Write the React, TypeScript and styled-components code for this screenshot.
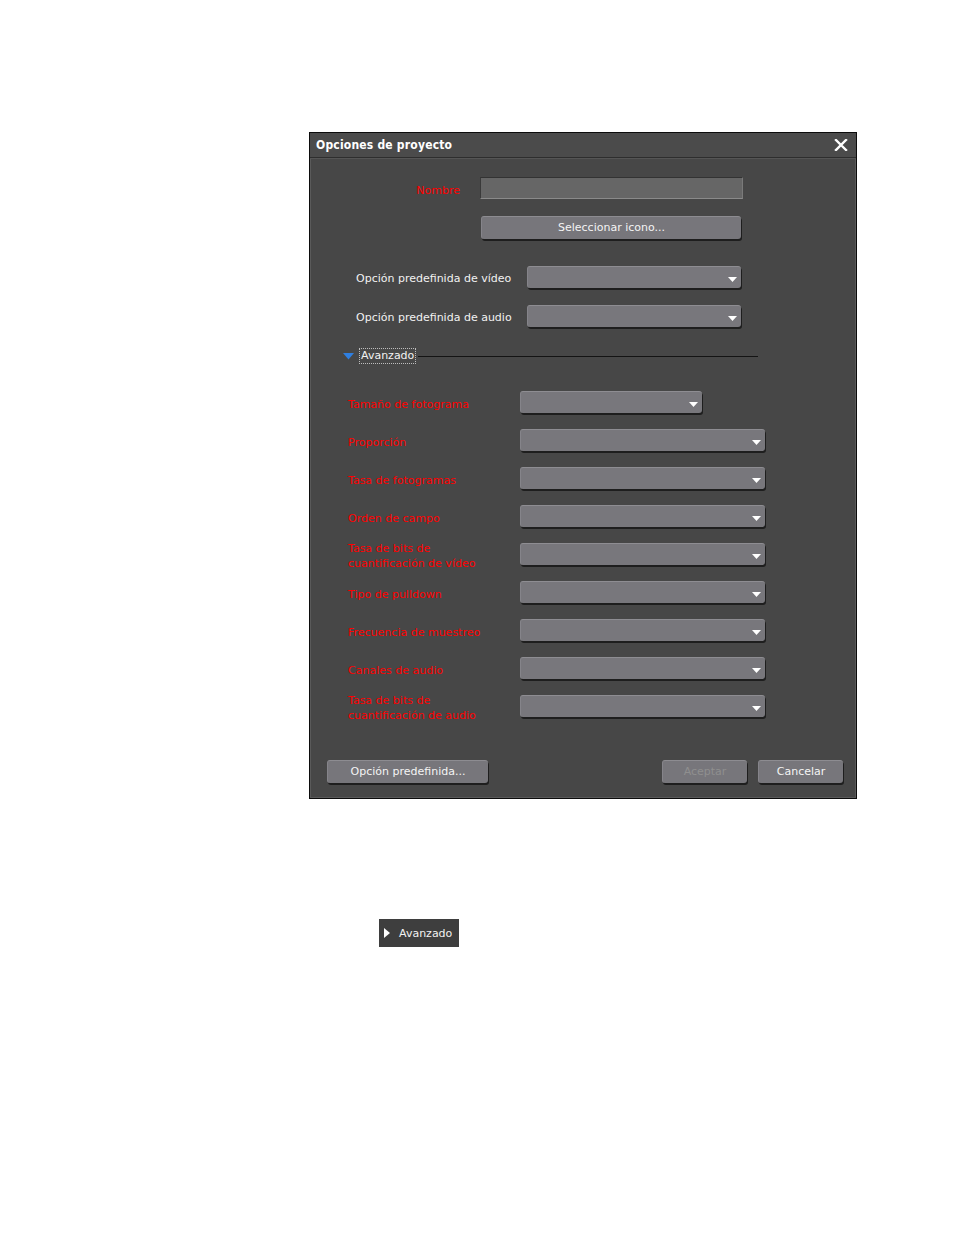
import styled, { createGlobalStyle } from "styled-components";

const GlobalStyle = createGlobalStyle`
  body {
    margin: 0;
    background: #ffffff;
    font-family: "DejaVu Sans", "Liberation Sans", sans-serif;
  }
`;

const presetRows = ["Opción predefinida de vídeo", "Opción predefinida de audio"];

const advancedRows: { label: string[]; narrow?: boolean }[] = [
  { label: ["Tamaño de fotograma"], narrow: true },
  { label: ["Proporción"] },
  { label: ["Tasa de fotogramas"] },
  { label: ["Orden de campo"] },
  { label: ["Tasa de bits de", "cuantificación de vídeo"] },
  { label: ["Tipo de pulldown"] },
  { label: ["Frecuencia de muestreo"] },
  { label: ["Canales de audio"] },
  { label: ["Tasa de bits de", "cuantificación de audio"] },
];

const Arrow = () => (
  <svg width="9" height="5" viewBox="0 0 9 5">
    <path d="M0 0 H9 L4.5 5 Z" fill="#ffffff" />
  </svg>
);

const Dropdown = ({ narrow }: { narrow?: boolean }) => (
  <Select narrow={narrow}>
    <Arrow />
  </Select>
);

const App = () => {
  return (
    <Page>
      <GlobalStyle />
      <Dialog>
        <TitleBar>
          <Title>Opciones de proyecto</Title>
          <svg width="14" height="12" viewBox="0 0 14 12">
            <path d="M2 1 L12 11 M12 1 L2 11" stroke="#ffffff" strokeWidth="2.4" strokeLinecap="square" />
          </svg>
        </TitleBar>
        <Body>
          <TopGrid>
            <RedLabel align="right">Nombre</RedLabel>
            <Input />
            <span />
            <Button wide>Seleccionar icono...</Button>
          </TopGrid>

          <PresetGrid>
            {presetRows.map((r) => (
              <Row key={r}>
                <Label>{r}</Label>
                <Dropdown />
              </Row>
            ))}
          </PresetGrid>

          <SectionHeader>
            <svg width="11" height="7" viewBox="0 0 11 7">
              <path d="M0 0 H11 L5.5 6.5 Z" fill="#2f7fe0" />
            </svg>
            <FocusText>Avanzado</FocusText>
            <Rule />
          </SectionHeader>

          <AdvancedGrid>
            {advancedRows.map((r) => (
              <Row key={r.label.join(" ")}>
                <RedLabel>
                  {r.label.map((l) => (
                    <div key={l}>{l}</div>
                  ))}
                </RedLabel>
                <Dropdown narrow={r.narrow} />
              </Row>
            ))}
          </AdvancedGrid>

          <Footer>
            <Button w={161}>Opción predefinida...</Button>
            <Spacer />
            <Button w={85} disabled>
              Aceptar
            </Button>
            <Button w={85}>Cancelar</Button>
          </Footer>
        </Body>
      </Dialog>

      <Collapsed>
        <svg width="6" height="10" viewBox="0 0 6 10">
          <path d="M0 0 L6 5 L0 10 Z" fill="#ffffff" />
        </svg>
        <span>Avanzado</span>
      </Collapsed>
    </Page>
  );
};

export default App;

const Page = styled.div`
  padding: 132px 0 0 309px;
  min-height: 1235px;
  box-sizing: border-box;
`;

const Dialog = styled.div`
  width: 548px;
  height: 667px;
  box-sizing: border-box;
  background: #474747;
  border: 1px solid #0c0c0c;
  box-shadow: inset 0 0 0 1px #5a5a5a;
  display: flex;
  flex-direction: column;
  font-size: 11px;
`;

const TitleBar = styled.div`
  height: 24px;
  display: flex;
  align-items: center;
  justify-content: space-between;
  padding: 0 8px 0 6px;
  background: #4b4b4b;
  border-bottom: 1px solid #2e2e2e;
  box-shadow: 0 1px 0 #555555;
  flex-shrink: 0;
`;

const Title = styled.div`
  color: #ffffff;
  font-family: "DejaVu Sans Condensed", "DejaVu Sans", sans-serif;
  font-stretch: condensed;
  font-weight: bold;
  font-size: 12px;
  letter-spacing: 0.2px;
`;

const Body = styled.div`
  flex: 1;
  display: flex;
  flex-direction: column;
  padding: 0 13px 15px 0;
`;

const TopGrid = styled.div`
  display: grid;
  grid-template-columns: 150px 263px;
  column-gap: 20px;
  row-gap: 17px;
  margin-top: 19px;
  align-items: center;
`;

const Label = styled.div`
  color: #f2f2f2;
  line-height: 15px;
  padding-top: 3px;
`;

const RedLabel = styled.div<{ align?: string }>`
  color: #ff0000;
  line-height: 15px;
  padding-top: 4px;
  text-align: ${(p) => p.align || "left"};
`;

const Input = styled.div`
  height: 22px;
  box-sizing: border-box;
  background: #666666;
  border-top: 1px solid #333333;
  border-left: 1px solid #3a3a3a;
  border-bottom: 1px solid #8a8a8a;
  border-right: 1px solid #7a7a7a;
`;

const Button = styled.div<{ w?: number; wide?: boolean; disabled?: boolean }>`
  width: ${(p) => (p.wide ? "260px" : `${p.w}px`)};
  margin-left: ${(p) => (p.wide ? "1px" : "0")};
  height: 23px;
  box-sizing: border-box;
  display: flex;
  align-items: center;
  justify-content: center;
  background: #77767b;
  border-radius: 3px;
  border-top: 1px solid #8d8c91;
  border-left: 1px solid #85848a;
  box-shadow: 1px 2px 0 #1e1e1e;
  color: ${(p) => (p.disabled ? "#8f8f8f" : "#f4f4f4")};
  padding-bottom: 1px;
`;

const Select = styled.div<{ narrow?: boolean }>`
  width: ${(p) => (p.narrow ? "182px" : "100%")};
  height: 22px;
  box-sizing: border-box;
  background: #78777c;
  border-radius: 3px;
  border-top: 1px solid #8e8d92;
  border-left: 1px solid #85848a;
  box-shadow: 1px 2px 0 #1e1e1e;
  display: flex;
  align-items: center;
  justify-content: flex-end;
  padding: 3px 4px 0 0;
`;

const Row = styled.div`
  display: contents;
`;

const PresetGrid = styled.div`
  display: grid;
  grid-template-columns: 171px 214px;
  grid-auto-rows: 22px;
  row-gap: 17px;
  margin-top: 27px;
  padding-left: 46px;
  align-items: center;
`;

const SectionHeader = styled.div`
  display: flex;
  align-items: center;
  height: 16px;
  margin-top: 21px;
  margin-left: 33px;
  gap: 6px;
  width: 415px;
`;

const FocusText = styled.span`
  color: #f2f2f2;
  outline: 1px dotted #bdbdbd;
  padding: 0 1px;
  line-height: 14px;
`;

const Rule = styled.div`
  flex: 1;
  height: 1px;
  background: #141414;
  margin-left: -3px;
`;

const AdvancedGrid = styled.div`
  display: grid;
  grid-template-columns: 172px 245px;
  grid-auto-rows: 22px;
  row-gap: 16px;
  margin-top: 27px;
  padding-left: 38px;
  align-items: center;
`;

const Footer = styled.div`
  margin-top: auto;
  display: flex;
  gap: 11px;
  padding-left: 17px;
`;

const Spacer = styled.div`
  flex: 1;
`;

const Collapsed = styled.div`
  margin: 120px 0 0 70px;
  width: 80px;
  height: 28px;
  box-sizing: border-box;
  background: #3e3e3e;
  display: flex;
  align-items: center;
  gap: 9px;
  padding-left: 5px;
  color: #f2f2f2;
  font-size: 11px;
`;
